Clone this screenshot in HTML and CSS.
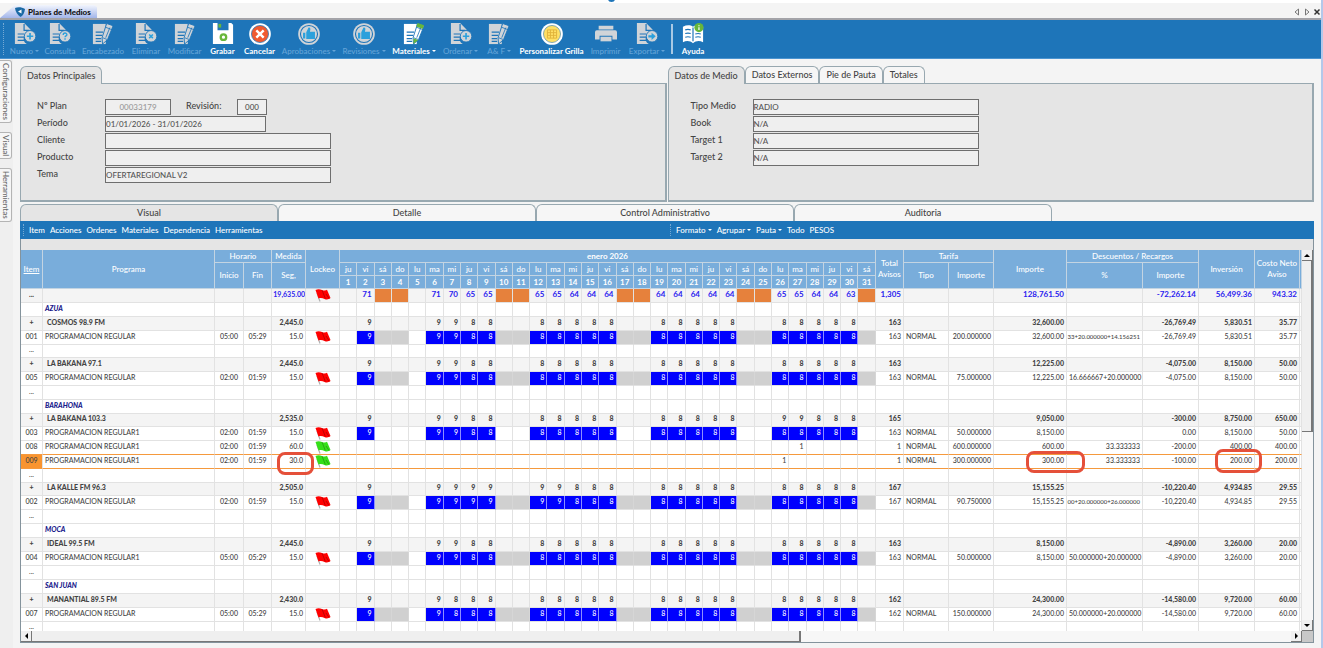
FILE: index.html
```html
<!DOCTYPE html>
<html lang="es">
<head>
<meta charset="utf-8">
<title>Planes de Medios</title>
<link rel="stylesheet" href="styles.css">
</head>
<body>
<svg class="defs" aria-hidden="true">
  <defs>
    <symbol id="doc" viewBox="0 0 24 24"><path d="M1 0h10l7 7v3a7 7 0 0 0-4 13H1z" fill="currentColor"/><path d="M11 1v7h6M4 12h7M4 15.500h7M4 19h8" fill="none" stroke="#1e75b9" stroke-width="1.300"/><circle cx="17.500" cy="14.500" r="6.300" fill="currentColor" stroke="#1e75b9"/></symbol>
    <symbol id="edit" viewBox="0 0 24 24"><path d="M1 1h14v22H1z" fill="currentColor"/><path d="M4 10h8M4 13.500h7M4 17h6M4 20h6" fill="none" stroke="#1e75b9" stroke-width="1.300"/><path d="M16 .5l7 2.500-6 15-5.500 5-.5-7z" fill="currentColor" stroke="#1e75b9" stroke-width="1"/><path d="M19.500 5l-4.500 11M14.500 4.500l7 2.700M11.500 16l5 2" stroke="#1e75b9" stroke-width=".9" fill="none"/></symbol>
    <symbol id="thumb" viewBox="0 0 24 24"><circle cx="12" cy="12" r="11.800" fill="currentColor"/><circle cx="12" cy="12" r="9.300" fill="none" stroke="#1e75b9" stroke-width="1.200"/><path d="M5.500 10.500h2.500V17H5.500zM9 10l2.500-5c2.500 0 2.300 2 1.500 4.500h5.500V17.500H9z" fill="#2ba0dc"/></symbol>
    <symbol id="flag" viewBox="0 0 16 13"><path d="M2 4l3 8.500" stroke="#b0b0b0" stroke-width="1.200"/><path d="M.5 1C3-.3 5 .2 7 1s4 .6 5-.2L15.500 9c-2 1.700-4 1.700-6 .9S5.500 8.500 3.500 9.500z" fill="currentColor"/><path d="M7 1l3.300 8.500M11 5l3 4.500" stroke="#000" stroke-opacity=".25" fill="none"/></symbol>
  </defs>
</svg>
<span class="drop-dot"></span>
<header class="tabstrip">
  <button class="doc-tab"><svg class="doc-logo" viewBox="0 0 10 10"><path d="M0 1c3-1.500 7-1 10 1C9.500 6 8 8.500 5.500 10 2.500 8 .5 5 0 1z" fill="#1b6aa5"/><path d="M3 4.500L6.500 2.500v4z" fill="#fff"/></svg>Planes de Medios</button>
  <div class="window-controls">
    <button aria-label="Anterior"><svg viewBox="0 0 8 8"><path d="M5.500 1v6L2 4z" fill="none" stroke="#777"/></svg></button>
    <button aria-label="Siguiente"><svg viewBox="0 0 8 8"><path d="M2.500 1v6L6 4z" fill="none" stroke="#777"/></svg></button>
    <button aria-label="Cerrar"><svg viewBox="0 0 8 8"><path d="M1.500 1.500l5 5m0-5l-5 5" stroke="#333" stroke-width="1.500"/></svg></button>
  </div>
</header>
<nav class="toolbar">
  <span class="grip"></span>
  <button class="tool off"><svg viewBox="0 0 24 24"><use href="#doc"/><path d="M17.500 11v7M14 14.500h7" stroke="#2ba0dc" stroke-width="1.800"/></svg><span>Nuevo <i class="caret"></i></span></button>
  <button class="tool off"><svg viewBox="0 0 24 24"><use href="#doc"/><path d="M15.500 13c0-2.800 4-2.600 4-.3 0 1.400-2 1.400-2 2.800M17.500 16.700v1.500" fill="none" stroke="#2ba0dc" stroke-width="1.500"/></svg><span>Consulta</span></button>
  <button class="tool off"><svg viewBox="0 0 24 24"><use href="#edit"/></svg><span>Encabezado</span></button>
  <button class="tool off"><svg viewBox="0 0 24 24"><use href="#doc"/><path d="M15.500 12.500l4 4m0-4l-4 4" stroke="#2ba0dc" stroke-width="1.700"/></svg><span>Eliminar</span></button>
  <button class="tool off"><svg viewBox="0 0 24 24"><use href="#edit"/></svg><span>Modificar</span></button>
  <button class="tool"><svg viewBox="0 0 24 24"><path d="M1 0h5v8h12V0h3l2 2v21H1z" fill="#fff"/><path d="M7 1h3v4H7z" fill="#67b63b"/><circle cx="12.500" cy="15.500" r="3" fill="none" stroke="#67b63b" stroke-width="2.500"/></svg><span>Grabar</span></button>
  <button class="tool"><svg viewBox="0 0 24 24"><circle cx="12" cy="12" r="11.800" fill="#fff"/><circle cx="12" cy="12" r="9.300" fill="#f05a30" stroke="#1e75b9" stroke-width=".8"/><path d="M8 8l8 8m0-8l-8 8" stroke="#fff" stroke-width="2.600"/></svg><span>Cancelar</span></button>
  <button class="tool off"><svg viewBox="0 0 24 24"><use href="#thumb"/></svg><span>Aprobaciones <i class="caret"></i></span></button>
  <button class="tool off"><svg viewBox="0 0 24 24"><use href="#thumb"/></svg><span>Revisiones <i class="caret"></i></span></button>
  <button class="tool"><svg viewBox="0 0 24 24"><use href="#edit"/><path d="M16 0l7 2.500-1.500 4-7-2.700zM11.500 16.500l5 2-5 4.500z" fill="#67b63b"/></svg><span>Materiales <i class="caret"></i></span></button>
  <button class="tool off"><svg viewBox="0 0 24 24"><use href="#doc"/><path d="M17.500 11v7M14 14.500h7" stroke="#2ba0dc" stroke-width="1.800"/></svg><span>Ordenar <i class="caret"></i></span></button>
  <button class="tool off"><svg viewBox="0 0 24 24"><use href="#edit"/></svg><span>A&amp; F <i class="caret"></i></span></button>
  <button class="tool"><svg viewBox="0 0 24 24"><circle cx="12" cy="12" r="11.800" fill="#fff"/><circle cx="12" cy="12" r="9.300" fill="#ffe066" stroke="#5b8fa8" stroke-width=".8"/><path d="M7 7.500h10v9H7zM7 10.500h10M7 13.500h10M10.300 7.500v9M13.700 7.500v9" fill="none" stroke="#e0b23a"/></svg><span>Personalizar Grilla</span></button>
  <button class="tool off"><svg viewBox="0 0 24 24"><path d="M4 3h16v4H4zM2 8h20a2 2 0 0 1 2 2v8h-5v-4H5v4H0v-8a2 2 0 0 1 2-2z" fill="currentColor"/><path d="M6 15h12v5H6z" fill="currentColor"/></svg><span>Imprimir</span></button>
  <button class="tool off"><svg viewBox="0 0 24 24"><use href="#doc"/><path d="M13.500 13.300h3.500v-2.800l4.500 4-4.500 4v-2.800h-3.500z" fill="#2ba0dc"/></svg><span>Exportar <i class="caret"></i></span></button>
  <span class="tool-sep"></span>
  <button class="tool"><svg viewBox="0 0 24 24"><path d="M1 4c4-2 8-2 11 0 3-2 7-2 11 0v17c-4-2-8-1.500-11 1-3-2.500-7-3-11-1z" fill="#fff"/><path d="M12 5v15M3.500 7.500c2-.7 4-.7 6 0M3.500 11.500c2-.7 4-.7 6 0M3.500 15.500c2-.7 4-.7 6 0M14.500 12c2-.7 4-.7 6 0M14.500 15.500c2-.7 4-.7 6 0" fill="none" stroke="#1e75b9" stroke-width="1.300"/><circle cx="18.500" cy="5" r="5" fill="#67b63b"/><path d="M18.500 2.500v1M18.500 4.500v3" stroke="#fff" stroke-width="1.300"/></svg><span>Ayuda</span></button>
</nav>
<div class="shell">
  <aside class="dock">
    <button>Configuraciones</button>
    <button>Visual</button>
    <button>Herramientas</button>
  </aside>
  <main class="work">
    <div class="panels">
      <section class="panel">
        <div class="tabs"><button class="tab on">Datos Principales</button></div>
        <form class="sheet">
          <div class="field"><label for="plan">Nº Plan</label><input id="plan" class="w-plan muted" value="00033179" readonly><label for="rev" class="rev">Revisión:</label><input id="rev" class="w-rev" value="000" readonly></div>
          <div class="field"><label for="periodo">Período</label><input id="periodo" class="w-period" value="01/01/2026 - 31/01/2026" readonly></div>
          <div class="field"><label for="cliente">Cliente</label><input id="cliente" class="w-full" readonly></div>
          <div class="field"><label for="producto">Producto</label><input id="producto" class="w-full" readonly></div>
          <div class="field"><label for="tema">Tema</label><input id="tema" class="w-full" value="OFERTAREGIONAL V2" readonly></div>
        </form>
      </section>
      <section class="panel">
        <div class="tabs"><button class="tab on">Datos de Medio</button><button class="tab">Datos Externos</button><button class="tab">Pie de Pauta</button><button class="tab">Totales</button></div>
        <form class="sheet medio">
          <div class="field"><label for="tipo">Tipo Medio</label><input id="tipo" class="w-full" value="RADIO" readonly></div>
          <div class="field"><label for="book">Book</label><input id="book" class="w-full" value="N/A" readonly></div>
          <div class="field"><label for="t1">Target 1</label><input id="t1" class="w-full" value="N/A" readonly></div>
          <div class="field"><label for="t2">Target 2</label><input id="t2" class="w-full" value="N/A" readonly></div>
        </form>
      </section>
    </div>
    <div class="views"><button class="tab on">Visual</button><button class="tab">Detalle</button><button class="tab">Control Administrativo</button><button class="tab">Auditoria</button></div>
    <nav class="menubar">
      <div class="menu"><span class="grip"></span><button>Item</button><button>Acciones</button><button>Ordenes</button><button>Materiales</button><button>Dependencia</button><button>Herramientas</button></div>
      <div class="menu"><span class="grip"></span><button>Formato <i class="caret"></i></button><button>Agrupar <i class="caret"></i></button><button>Pauta <i class="caret"></i></button><button>Todo</button><button>PESOS</button></div>
    </nav>
    <div class="grid-frame">
      <div class="viewport">
        <table class="grid">
          <colgroup id="cols"></colgroup>
          <thead id="head"></thead>
          <tbody id="rows"></tbody>
        </table>
      </div>
      <div class="vbar"><button aria-label="Subir"><i class="up"></i></button><div class="vthumb"></div><button class="last" aria-label="Bajar"><i class="down"></i></button></div>
      <div class="hbar"><button aria-label="Izquierda"><i class="left"></i></button><div class="hthumb"></div><button class="last" aria-label="Derecha"><i class="right"></i></button></div>
      <div class="corner"></div>
    </div>
  </main>
</div>
<script src="grid.js"></script>
</body>
</html>
```
FILE: styles.css
```css
* { box-sizing: border-box; }
body {
  margin: 0;
  height: 100vh;
  display: flex;
  flex-direction: column;
  padding-top: 3px;
  border-right: 2px solid #b4c8ea;
  background: linear-gradient(#fff 3px, #f4f4f4 3px);
  color: #444;
  font: 500 9px/12px Lato, "Open Sans", sans-serif;
  overflow: hidden;
}
button {
  margin: 0;
  padding: 0;
  border: 0;
  background: none;
  color: inherit;
  font: inherit;
  white-space: nowrap;
}
.defs { position: absolute; width: 0; height: 0; }
.drop-dot {
  position: absolute;
  top: -4px;
  left: 608px;
  width: 7px;
  height: 6px;
  border-radius: 50%;
  background: #1e75b9;
}

/* Document tabs */
.tabstrip { display: flex; justify-content: space-between; height: 15px; padding-top: 2px; flex: none; }
.doc-tab {
  display: flex;
  align-items: center;
  gap: 3px;
  width: 97px;
  padding-left: 15px;
  background: linear-gradient(#f2f5fd, #a3b6ea);
  clip-path: polygon(15px 0, 97% 0, 100% 2px, 100% 100%, 0 100%);
  color: #111;
  font-size: 8px;
  font-weight: 900;
}
.doc-logo { width: 10px; height: 10px; }
.window-controls { display: flex; align-items: center; gap: 2px; }
.window-controls button { display: flex; }
.window-controls svg { width: 8px; height: 8px; }

/* Main toolbar */
.toolbar {
  flex: none;
  display: grid;
  grid-template-columns: 7px 35px 36px 50px 36px 41px 35px 39px 60px 50px 50px 43px 34px 71px 37px 46px 10px 26px;
  height: 41px;
  border-top: 2px solid #a3a3a8;
  border-bottom: 1px solid #4b94d0;
  background: #1e75b9;
  color: #fff;
}
.grip { width: 1px; margin: 3px 0 3px 3px; border-left: 1px dotted #75a9d4; }
.tool {
  display: flex;
  flex-direction: column;
  align-items: center;
  padding-top: 3px;
  font-size: 8px;
  font-weight: 700;
  line-height: 11px;
}
.tool svg { width: 22px; height: 22px; margin-bottom: 1px; }
.tool.off { color: #d0d4d8; font-weight: 500; }
.tool.off span { color: #64a4d8; }
.tool-sep { width: 2px; margin: 4px 0 4px 1px; background: #a9c9e4; }
.caret {
  display: inline-block;
  vertical-align: 2px;
  border: 2px solid transparent;
  border-top-color: currentColor;
  border-bottom: 0;
}

/* Side dock */
.shell { flex: 1; min-height: 0; display: flex; }
.dock { width: 13px; display: flex; flex-direction: column; gap: 9px; padding-top: 1px; flex: none; background: #efefef; }
.dock button {
  width: 12px;
  padding: 2px 0;
  border: 1px solid #b4b4b4;
  border-left: 0;
  border-radius: 0 3px 3px 0;
  background: #f6f6f6;
  color: #666;
  font-size: 8px;
  line-height: 10px;
  writing-mode: vertical-rl;
}

/* Data panels */
.work { flex: 1; min-width: 0; display: flex; flex-direction: column; padding: 7px 7px 5px; }
.panels { display: grid; grid-template-columns: 1fr 1fr; gap: 1px; }
.panel { display: flex; flex-direction: column; }
.tabs, .views { display: flex; }
.tab {
  height: 17px;
  border: 1px solid #98a8b0;
  border-bottom: 0;
  border-radius: 6px 6px 0 0;
  background: #f6f6f6;
}
.tab.on { background: #e5e5e5; }
.tabs .tab { padding: 0 6px; font-size: 9px; }
.tabs .on { position: relative; margin-bottom: -1px; height: 18px; }
.sheet {
  display: flex;
  flex-direction: column;
  gap: 1px;
  height: 119px;
  padding: 15px 16px;
  border: 1px solid #98a8b0;
  border-width: 1px 2px 2px 1px;
  background: #e5e5e5;
}
.field { display: flex; height: 16px; font-size: 9px; line-height: 13px; }
.field label { width: 68px; }
.medio { padding-left: 22px; }
.medio label { width: 62px; }
.field label.rev { width: 66px; padding-left: 15px; }
.field input {
  height: 16px;
  padding: 0 0 1px;
  border: 1px solid #6e6e6e;
  border-radius: 0;
  background: #efefef;
  color: #555;
  font: 500 8px Lato, sans-serif;
}
.field .w-plan { width: 66px; text-align: center; }
.field .w-rev { width: 30px; text-align: center; }
.field .muted { color: #9a9a9a; }
.w-period { width: 161px; }
.w-full { width: 226px; }

/* View tabs and menu */
.views { margin-top: 2px; }
.views .tab { width: 258px; font-size: 9px; }
.menubar { display: grid; grid-template-columns: 1fr 1fr; height: 18px; flex: none; background: #1e75b9; color: #fff; }
.menu { display: flex; gap: 5px; font-size: 8px; }

/* Grid */
.grid-frame {
  flex: 1;
  min-height: 0;
  display: grid;
  grid-template: minmax(0, 1fr) 11px / minmax(0, 1fr) 11px;
  padding-top: 11px;
  border: solid #84939c;
  border-width: 0 1px 1px;
  background: #e5e5e5;
}
.viewport { overflow: hidden; background: #fff; }
.grid { width: 100%; table-layout: fixed; border-spacing: 0; font-size: 7px; line-height: 9px; }
.grid th, .grid td { padding: 0 2px 3px; border: 0 solid #e2e2e2; border-width: 0 1px 1px 0; white-space: nowrap; overflow: hidden; }
.grid thead tr { height: 13px; }
.grid th {
  padding: 0;
  border-color: #c3d4e2;
  background: #79addb;
  color: #fff;
  font-size: 8px;
  font-weight: 500;
  line-height: 11px;
}
.grid th.month { font-weight: 700; }
.grid tbody tr { height: 14px; }
.grid tbody tr:nth-child(5n) { height: 13px; }
.grid td.n { text-align: right; }
.grid td.c { text-align: center; padding-left: 0; padding-right: 0; }
.grid td.long { font-size: 6px; padding-left: 0; }
.grid td.flag { padding: 0; text-align: center; }
.flag svg { display: block; width: 16px; height: 13px; margin: 0 auto; }
.red { color: #f00; }
.green { color: #35df19; }
.total td, .group td { background: #f4f4f4; font-weight: 900; }
.grid .total .n { color: #2a22f0; font-size: 8px; font-weight: 700; padding-left: 0; }
.grid .total .seg { font-size: 7px; padding-right: 0; }
.total td.weekend { background: #e6813c; }
.grid .group .name { padding-left: 4px; }
.city .name { color: #1a1a8c; font-weight: 900; font-style: italic; }
.grid .item td.booked { background: #0000fe; border-right-color: #8d8dff; color: #fff; }
.item.shade td.weekend { background: #d0d0d0; border-right-color: #d6d6d6; }
.grid .current td { border-bottom-color: #f5993d; }
.grid .before td { border-bottom-color: #f5993d; }
.current td:first-child { background: #f9942f; }
.grid td.marked { position: relative; overflow: visible; }
.mark { position: absolute; border: 3px solid #e5503a; border-radius: 8px; }
.mark-seg { inset: -3px -9px -7px 5px; }
.mark-amount { inset: -4px -19px -5px 32px; }
.mark-invest { inset: -6px -8px -5px 16px; }

/* Scroll bars */
.vbar, .hbar { display: flex; background: #f7f7f7; }
.vbar { flex-direction: column; }
.vbar button, .hbar button {
  width: 11px;
  height: 11px;
  display: grid;
  place-items: center;
  background: #f0f0f0;
  border: solid #777;
  border-width: 0 1px 1px 0;
}
.vbar .last, .hbar .last { margin-top: auto; margin-left: auto; }
.vthumb, .hthumb { background: #efefef; border: solid #777; border-width: 0 2px 1px 0; }
.vthumb { height: 45%; }
.hthumb { width: 60%; }
.corner { background: #c8c8c8; }
.up, .down, .left, .right { border: 3px solid transparent; }
.up { border-bottom-color: #000; border-top: 0; }
.down { border-top-color: #000; border-bottom: 0; }
.left { border-right-color: #000; border-left: 0; }
.right { border-left-color: #000; border-right: 0; }
```
FILE: grid.js
```js
const WEEKDAYS = ["ju", "vi", "sá", "do", "lu", "ma", "mi"];
const WORKDAYS = [2, 6, 7, 8, 9, 12, 13, 14, 15, 16, 19, 20, 21, 22, 23, 26, 27, 28, 29, 30];
const isWeekend = d => d % 7 === 3 || d % 7 === 4;
const month = Array.from({ length: 31 }, (_, i) => i + 1);

// Maps one entry per workday to its day of the month
const spots = counts => Object.fromEntries(WORKDAYS.map((d, i) => [d, counts[i]]));

const widths = [22, 172, 29, 28, 34, 34, ...month.map(() => 0), 28, 45, 45, 73, 76, 56, 56, 45, 2];
document.getElementById("cols").innerHTML =
  widths.map(w => w ? `<col style="width:${w}px">` : "<col>").join("");

document.getElementById("head").innerHTML = `
<tr><th rowspan="3"><u>Item</u></th><th rowspan="3">Programa</th><th colspan="2">Horario</th><th>Medida</th>
<th rowspan="3">Lockeo</th><th class="month" colspan="31">enero 2026</th><th rowspan="3">Total<br>Avisos</th><th colspan="2">Tarifa</th>
<th rowspan="3">Importe</th><th colspan="2">Descuentos / Recargos</th><th rowspan="3">Inversión</th>
<th rowspan="3">Costo Neto<br>Aviso</th><th rowspan="3"></th></tr>
<tr><th rowspan="2">Inicio</th><th rowspan="2">Fin</th><th rowspan="2">Seg,</th>
${month.map(d => `<th>${WEEKDAYS[(d - 1) % 7]}</th>`).join("")}
<th rowspan="2">Tipo</th><th rowspan="2">Importe</th><th rowspan="2">%</th><th rowspan="2">Importe</th></tr>
<tr>${month.map(d => `<th class="month">${d}</th>`).join("")}</tr>`;

const blank = { cls: "", id: "..." };
const city = name => ({ cls: "city", name });
const group = (name, seg, digits, count, amount, disc, inv, cost) =>
  ({ cls: "group", id: "+", name, seg, days: spots(digits), count, amount, disc, inv, cost });
const item = (id, name, from, to, seg, flag, days, count, rate, amount, pct, disc, inv, cost, cls = "shade") =>
  ({ cls: "item " + cls, id, name, from, to, seg, flag, days, count, type: "NORMAL", rate, amount, pct, disc, inv, cost });

const totals = ["71", "71", "70", "65", "65", "65", "65", "64", "64", "64", "64", "64", "64", "64", "64", "65", "65", "64", "64", "63"];
const s = "99988888888888888888";
const bak = "99988888888888899888";
const kalle = "99999998888888888888";
const man = "99888888888888888888";
const rows = [
  { cls: "total", id: "...", seg: "19,635.00", flag: "red", days: spots(totals), count: "1,305", amount: "128,761.50", disc: "-72,262.14", inv: "56,499.36", cost: "943.32" },
  city("AZUA"),
  group("COSMOS 98.9 FM", "2,445.0", s, 163, "32,600.00", "-26,769.49", "5,830.51", "35.77"),
  item("001", "PROGRAMACION REGULAR", "05:00", "05:29", "15.0", "red", spots(s), 163, "200.000000", "32,600.00", "33+20.000000+14.156251", "-26,769.49", "5,830.51", "35.77"),
  blank,
  group("LA BAKANA 97.1", "2,445.0", s, 163, "12,225.00", "-4,075.00", "8,150.00", "50.00"),
  item("005", "PROGRAMACION REGULAR", "02:00", "01:59", "15.0", "red", spots(s), 163, "75.000000", "12,225.00", "16.666667+20.000000", "-4,075.00", "8,150.00", "50.00"),
  blank,
  city("BARAHONA"),
  group("LA BAKANA 103.3", "2,535.0", bak, 165, "9,050.00", "-300.00", "8,750.00", "650.00"),
  item("003", "PROGRAMACION REGULAR1", "02:00", "01:59", "15.0", "red", spots(s), 163, "50.000000", "8,150.00", "", "0.00", "8,150.00", "50.00", ""),
  item("008", "PROGRAMACION REGULAR1", "02:00", "01:59", "60.0", "green", { 27: "1" }, 1, "600.000000", "600.00", "33.333333", "-200.00", "400.00", "400.00", "before"),
  item("009", "PROGRAMACION REGULAR1", "02:00", "01:59", "30.0", "green", { 26: "1" }, 1, "300.000000", "300.00", "33.333333", "-100.00", "200.00", "200.00", "current"),
  blank,
  group("LA KALLE FM 96.3", "2,505.0", kalle, 167, "15,155.25", "-10,220.40", "4,934.85", "29.55"),
  item("002", "PROGRAMACION REGULAR", "02:00", "01:59", "15.0", "red", spots(kalle), 167, "90.750000", "15,155.25", "00+20.000000+26.000000", "-10,220.40", "4,934.85", "29.55"),
  blank,
  city("MOCA"),
  group("IDEAL 99.5 FM", "2,445.0", s, 163, "8,150.00", "-4,890.00", "3,260.00", "20.00"),
  item("004", "PROGRAMACION REGULAR1", "05:00", "05:29", "15.0", "red", spots(s), 163, "50.000000", "8,150.00", "50.000000+20.000000", "-4,890.00", "3,260.00", "20.00"),
  blank,
  city("SAN JUAN"),
  group("MANANTIAL 89.5 FM", "2,430.0", man, 162, "24,300.00", "-14,580.00", "9,720.00", "60.00"),
  item("007", "PROGRAMACION REGULAR", "05:00", "05:29", "15.0", "red", spots(man), 162, "150.000000", "24,300.00", "50.000000+20.000000", "-14,580.00", "9,720.00", "60.00"),
  blank
];

const cell = (cls, text = "") => `<td class="${cls}">${text}</td>`;

function renderRow(r) {
  const current = r.cls.includes("current");
  const marked = (cls, text, mark) =>
    current ? cell(cls + " marked", `${text}<span class="mark ${mark}"></span>`) : cell(cls, text);
  const booked = r.days && Object.keys(r.days).length > 1;
  const days = month.map(d => {
    const n = r.days && r.days[d];
    return cell("n day" + (isWeekend(d) ? " weekend" : "") + (n && booked ? " booked" : ""), n || "");
  }).join("");
  const flag = r.flag ? `<svg class="${r.flag}" viewBox="0 0 16 13"><use href="#flag"/></svg>` : "";
  const pctClass = r.pct && r.pct.length > 20 ? "n long" : "n";
  return `<tr class="${r.cls}">` +
    cell("c", r.id) + cell("name", r.name) + cell("c", r.from) + cell("c", r.to) +
    marked("n seg", r.seg, "mark-seg") + cell("flag", flag) + days +
    cell("n", r.count) + cell("", r.type) + cell("n", r.rate) +
    marked("n", r.amount, "mark-amount") + cell(pctClass, r.pct) + cell("n", r.disc) +
    marked("n", r.inv, "mark-invest") + cell("n", r.cost) + cell("") + "</tr>";
}

document.getElementById("rows").innerHTML =
  rows.map(renderRow).join("").replaceAll("undefined", "");
```
